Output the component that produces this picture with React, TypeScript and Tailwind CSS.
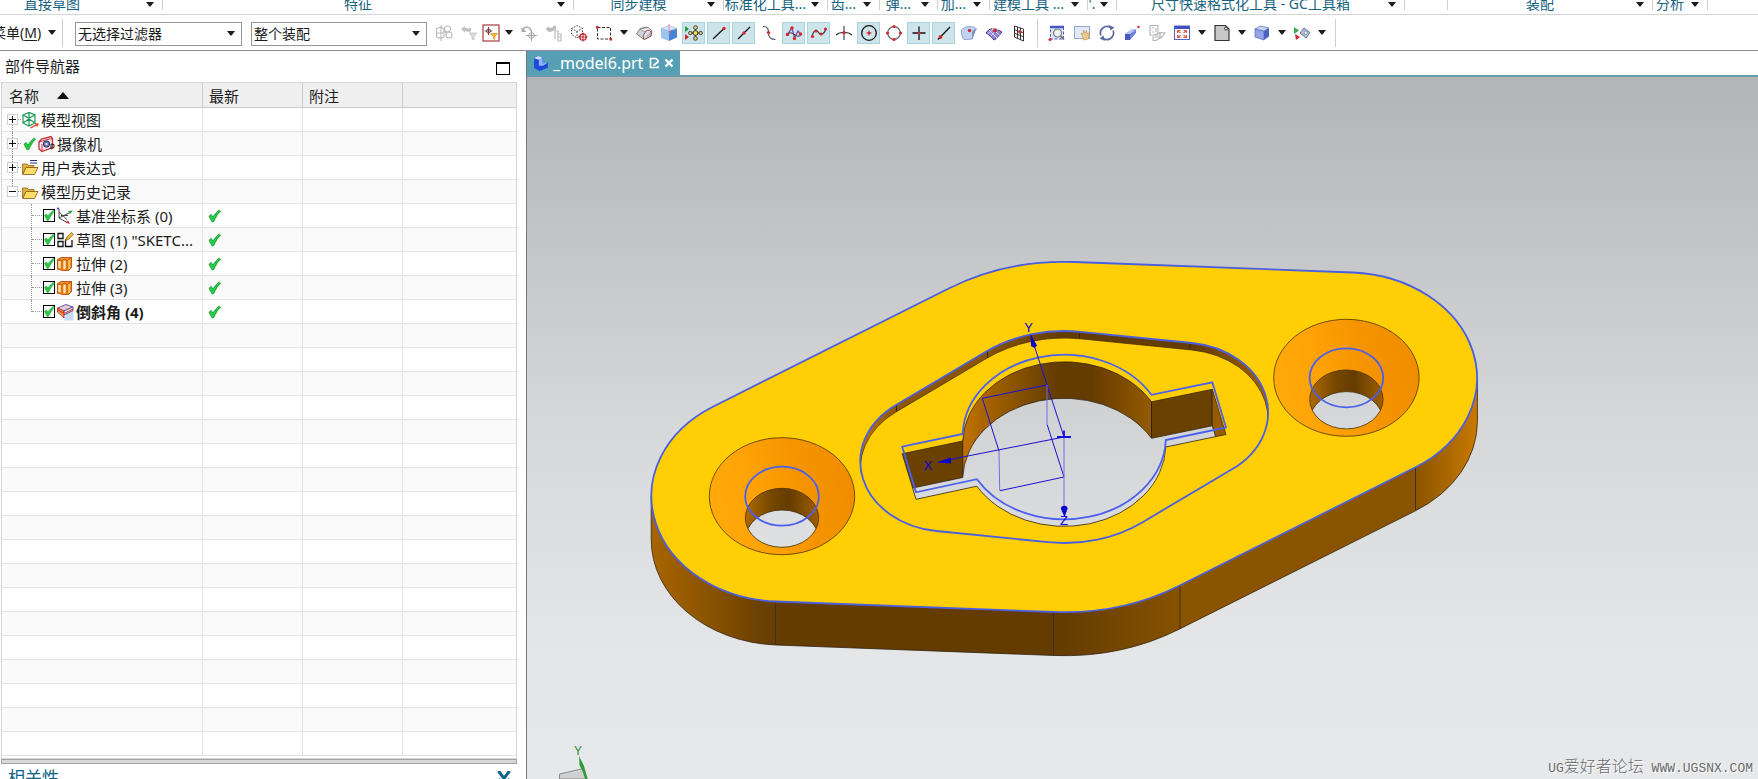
import React, { useState } from "react";

type Kids = { children?: React.ReactNode };

/* ---------- shared bits ---------- */

function Caret() {
  return (
    <svg width="8" height="5" viewBox="0 0 8 5" aria-hidden="true" className="block shrink-0">
      <path d="M0 0H8L4.5 4.6H3.5Z" fill="#1c1c1c" />
    </svg>
  );
}

function Svg({ children }: Kids) {
  return (
    <svg width="18" height="18" viewBox="0 0 18 18" fill="none" aria-hidden="true" className="block shrink-0">
      {children}
    </svg>
  );
}

function Tick() {
  return (
    <svg width="13" height="14" viewBox="0 0 13 14" aria-hidden="true" className="block shrink-0">
      <path d="M1 7.2L3.2 5.4L5 8.2C6.6 5.4 8.6 3 11.2 1L12.4 2.2C9.6 5 7.6 8.4 5.8 12.6L4 12.8Z" fill="#25cc3c" stroke="#109a35" strokeWidth="0.8" />
    </svg>
  );
}

/* ---------- ribbon ---------- */

const ribbon = [
  { label: "直接草图", w: "w-[201px]" },
  { label: "特征", w: "w-[411px]" },
  { label: "同步建模", w: "w-[150px]" },
  { label: "标准化工具...", w: "w-[104px]" },
  { label: "齿...", w: "w-[52px]" },
  { label: "弹...", w: "w-[58px]" },
  { label: "加...", w: "w-[52px]" },
  { label: "建模工具 ...", w: "w-[98px]" },
  { label: "'.", w: "w-[29px]" },
  { label: "尺寸快速格式化工具 - GC工具箱", w: "w-[288px]" },
  { label: "", w: "w-[43px]" },
  { label: "装配", w: "w-[205px]" },
  { label: "分析", w: "w-[55px]" },
];

function Ribbon() {
  return (
    <nav aria-label="功能区" className="h-[15px] shrink-0 overflow-hidden border-b border-[#d4d4d4] bg-white">
      <div className="-mt-[10px] -ml-[38px] flex h-7 items-center">
        {ribbon.map((g, i) => (
          <div key={i} className={`${g.w} flex h-full shrink-0 items-center`}>
            {g.label && (
              <button type="button" className="flex min-w-0 flex-1 items-center pr-2 text-sm text-[#17627f]">
                <span className="min-w-0 flex-1 pr-1 text-center whitespace-nowrap">{g.label}</span>
                <Caret />
              </button>
            )}
            {!g.label && <span className="flex-1" />}
            <span className="h-3 w-px bg-[#cfcfcf]" />
          </div>
        ))}
      </div>
    </nav>
  );
}

/* ---------- toolbar icons ---------- */

const red = "#d22630";

const ic: Record<string, React.ReactNode> = {
  assembly: (
    <Svg>
      <g stroke="#bcbcbc" strokeWidth="1.1">
        <path d="M1.5 4.5L6 3V14.5L1.5 13ZM6 3L9 5V13L6 14.5M1.5 9H9M6 1V17" />
        <circle cx="12.5" cy="5" r="3" /><circle cx="14" cy="11" r="3" /><path d="M9 7L12 10" />
      </g>
    </Svg>
  ),
  undoFilter: (
    <Svg>
      <path d="M1 5L5 2V4C8 3.5 9 6 11 3V7C9 9 7 7 5 7V9Z" fill="#c3c3c3" />
      <path d="M9 9H17L14 12.5V16L12 15V12.5Z" fill="#dcdcdc" stroke="#bbb" strokeWidth=".7" />
    </Svg>
  ),
  pointFilter: (
    <Svg>
      <rect x="1" y="1" width="16" height="16" stroke="#b04a4f" strokeWidth="1.3" fill="#fff" />
      <circle cx="6.5" cy="7" r="2" stroke="#6a3a3a" strokeWidth=".9" /><path d="M6.5 3V11M2.7 7H10.3" stroke="#6a3a3a" strokeWidth=".9" />
      <path d="M8.5 9.5H15.5L12.8 12.5V15.5L11.2 14.5V12.5Z" fill="#f2b632" stroke="#c98b12" strokeWidth=".6" />
    </Svg>
  ),
  undoPoint: (
    <Svg>
      <path d="M3 6C5 2 10 2 11 7" stroke="#aaa" strokeWidth="1.5" /><path d="M1.5 3V8H6.5Z" fill="#aaa" />
      <circle cx="11.5" cy="11.5" r="2.8" stroke="#999" strokeWidth=".9" /><path d="M11.5 6V17M6 11.5H17" stroke="#999" strokeWidth=".9" />
    </Svg>
  ),
  link: (
    <Svg>
      <path d="M1 5C3 1 6 6 8 3S12 2 11 6L8 7C6 8 3 9 1 5Z" fill="#bbb" />
      <path d="M10 7H13V10H16V13H13V17M10 7V15M13 10V17H16V13" stroke="#bdbdbd" strokeWidth="1.2" />
    </Svg>
  ),
  dottedCube: (
    <Svg>
      <path d="M1.5 4.5L7 1.5L12.5 4.5V10.5L7 14L1.5 10.5ZM1.5 4.5L7 7.5L12.5 4.5M7 7.5V14" stroke="#333" strokeDasharray="1.4 1.5" />
      <circle cx="13" cy="13" r="3.2" stroke={red} strokeWidth="1.3" /><path d="M13 8.5V17.5M8.5 13H17.5" stroke="#8c1c24" strokeWidth=".9" />
    </Svg>
  ),
  marquee: (
    <Svg>
      <rect x="2.5" y="3.5" width="13" height="11.5" stroke="#333" strokeDasharray="3 1.5" />
      <rect x="1" y="2" width="2.5" height="2.5" fill={red} /><rect x="14.5" y="14" width="2.5" height="2.5" fill={red} />
    </Svg>
  ),
  shaded: (
    <Svg>
      <path d="M1.5 10L5 4.5L12 3L17 7L16 12L9 15.5Z" fill="#cfd3dc" stroke="#777" strokeWidth=".9" />
      <path d="M5 5L13 3.5L17 7L11 8.5Z" fill="#f1f1f4" stroke="#777" strokeWidth=".7" />
      <path d="M8 12L11 7C12 5.5 15 6 16 8V12L9 15.5Z" fill="#dcdfe8" stroke="#9b4040" strokeWidth=".9" />
      <path d="M10.5 13.5L13 9.5L15 9V12Z" fill="#b9c0cf" />
    </Svg>
  ),
  blueCube: (
    <Svg>
      <path d="M1 4.5L9 6.8V17L1 14Z" fill="#9cc3f2" /><path d="M9 6.8L17 4.5V13.5L9 17Z" fill="#4a83d6" />
      <path d="M1 4.5L9 1.5L17 4.5L9 6.8Z" fill="#d4e4fa" stroke="#8aa6cf" strokeWidth=".5" />
      <path d="M9 0V11" stroke="#e88" strokeWidth=".9" />
    </Svg>
  ),
  snapAll: (
    <Svg>
      <path d="M0 2L4 5L0 8Z" fill="#1f9d3a" /><path d="M0 10L4 13L0 16Z" fill={red} />
      <path d="M10.5 9H4M10.5 9V3M10.5 9H17M10.5 9V15" stroke="#222" />
      <circle cx="10.5" cy="9" r="2.4" fill="#ffe14a" stroke="#222" strokeWidth=".9" />
      <g fill="#d9d08a" stroke="#333" strokeWidth=".9"><circle cx="10.5" cy="3.6" r="1.9" /><circle cx="10.5" cy="14.4" r="1.9" /><circle cx="5.3" cy="9" r="1.7" /><circle cx="15.7" cy="9" r="1.7" /></g>
    </Svg>
  ),
  endPoint: <Svg><path d="M3 15L14 4.5" stroke="#111" strokeWidth="1.2" /><circle cx="14" cy="4.5" r="1.7" fill={red} /></Svg>,
  midPoint: <Svg><path d="M3 15L15 3" stroke="#111" strokeWidth="1.2" /><circle cx="9" cy="9" r="1.7" fill={red} /></Svg>,
  control: <Svg><path d="M3 2.5C8 2.5 8.5 5 8.5 9S11 15.5 15.5 15.5" stroke="#555" strokeWidth="1.2" /><circle cx="8.5" cy="8.5" r="1.6" fill={red} /></Svg>,
  poles: (
    <Svg>
      <path d="M2 11L7 4L9.5 14L13 7L16 11" stroke="#7d4ab5" strokeWidth="1.3" /><path d="M2 11C7 4 11 16 16 11" stroke="#333" />
      <g fill={red}><circle cx="2.5" cy="10.5" r="1.7" /><circle cx="7" cy="4" r="1.7" /><circle cx="9.5" cy="14.5" r="1.7" /><circle cx="15.5" cy="10" r="1.7" /></g>
    </Svg>
  ),
  spline: (
    <Svg>
      <path d="M2 13C4 4 7 6 9 9S14 10 16 5" stroke="#333" strokeWidth="1.2" />
      <g fill={red}><circle cx="2.5" cy="12.5" r="1.6" /><circle cx="6" cy="7" r="1.6" /><circle cx="11" cy="10" r="1.6" /><circle cx="15.5" cy="5" r="1.6" /></g>
    </Svg>
  ),
  intersect: <Svg><path d="M1 11C5 7.5 13 7.5 17 11M9 2V16" stroke="#444" strokeWidth="1.2" /><circle cx="9" cy="8.5" r="1.6" fill={red} /></Svg>,
  center: <Svg><circle cx="9" cy="9" r="7.3" stroke="#111" strokeWidth="1.3" /><path d="M9 6.5V11.5M6.5 9H11.5" stroke={red} /><circle cx="9" cy="9" r="1.5" fill={red} /></Svg>,
  quadrant: (
    <Svg>
      <circle cx="9" cy="9" r="6.3" stroke="#666" strokeWidth="1.2" />
      <g fill={red}><circle cx="9" cy="2.5" r="1.6" /><circle cx="9" cy="15.5" r="1.6" /><circle cx="2.5" cy="9" r="1.6" /><circle cx="15.5" cy="9" r="1.6" /></g>
    </Svg>
  ),
  existing: <Svg><path d="M9 2.5V16M2.5 9H15.5" stroke="#111" strokeWidth="1.3" /><circle cx="9" cy="9" r="1.5" fill={red} /></Svg>,
  onCurve: <Svg><path d="M3 15.5L15 3" stroke="#111" strokeWidth="1.3" /><circle cx="5.5" cy="13" r="1.9" fill={red} /></Svg>,
  onFace: (
    <Svg>
      <path d="M1.5 6C5 2 10 2 15 3.5L16.5 5C14 7 13.5 10 12.5 15L4 15.5C2 14 1.5 10 1.5 6Z" fill="#c2d5ef" stroke="#7f9cc6" strokeWidth=".9" />
      <path d="M12.5 15L12 8C13 6 14.5 5 16.5 5C14.5 8 14 11 12.5 15Z" fill="#7490bb" /><circle cx="9.5" cy="6.5" r="1.7" fill={red} />
    </Svg>
  ),
  mesh: (
    <Svg>
      <path d="M1 9C4 4 9 3 17 8C14 11 12 15 9 16C6 12 4 11 1 9Z" fill="#8c83d8" stroke="#3a3580" strokeWidth=".9" />
      <path d="M4 6L12 14M7 4.5L14.5 11M6 12C8 9 10 7 13 5.5M3 10C5 7 8 5 10 4.5" stroke="#e4e0ff" /><circle cx="10" cy="6.5" r="1.9" fill={red} />
    </Svg>
  ),
  grid: (
    <Svg>
      <path d="M4.5 2L13.5 5V17L4.5 13ZM7.5 3V14.5M10.5 4V16M4.5 5.7L13.5 8.7M4.5 9.3L13.5 12.7" stroke="#333" strokeWidth="1" /><circle cx="10" cy="8" r="1.7" fill={red} />
    </Svg>
  ),
  zoomBox: (
    <Svg>
      <rect x="2.5" y="2.5" width="13" height="12.5" fill="#dfe6fa" stroke="#4a5ac9" strokeDasharray="3 1.5" /><path d="M2 3H16" stroke="#4356c4" strokeWidth="2.5" />
      <circle cx="9.5" cy="9" r="4" fill="#e9f3ee" stroke="#777" strokeWidth="1.2" /><path d="M12.5 12L16 15.5" stroke="#777" strokeWidth="1.8" />
      <circle cx="2" cy="15.5" r="1.5" fill={red} />
    </Svg>
  ),
  pan: (
    <Svg>
      <rect x="1.5" y="2.5" width="15" height="12" fill="#e2e9fb" stroke="#9aa5cf" />
      <path d="M8 9L10 10L10.5 6L12 9L13.5 6.5L14 10L16.5 8.5L15.5 15L11 16Z" fill="#eccb8a" stroke="#b99147" strokeWidth=".6" />
    </Svg>
  ),
  rotate: (
    <Svg>
      <path d="M3 11.5A6.5 6.5 0 0 1 12.5 3.5M15 6.5A6.5 6.5 0 0 1 5.5 14.5" stroke="#5c6d9f" strokeWidth="1.7" />
      <path d="M11 1L16.5 3.5L12.5 6.5ZM7 17L1.5 14.5L5.5 11.5Z" fill="#5c6d9f" />
    </Svg>
  ),
  extrude: (
    <Svg>
      <path d="M2 10L9 5.5L13 5.5V9L7 16H2Z" fill="#6f7fdd" /><path d="M2 10H7L13 5.5H8.5Z" fill="#b6c0f5" /><path d="M2 10H7V16H2Z" fill="#4a58c0" /><circle cx="15.5" cy="3" r="1.2" fill={red} />
    </Svg>
  ),
  copyFace: (
    <Svg>
      <path d="M2 1.5H10V11H2ZM4 4H6M4 8H6M8 4V8" stroke="#b4b4b4" strokeWidth="1.1" /><path d="M6 11L12 8.5L17 9L14 13L8 16.5H5V13H14M12 8.5V15" stroke="#b4b4b4" strokeWidth="1.1" />
    </Svg>
  ),
  window: (
    <Svg>
      <rect x="1.5" y="2" width="15" height="13.5" fill="#fff" stroke="#5566c4" /><path d="M1.5 3.5H16.5" stroke="#3f52c0" strokeWidth="3" />
      <path d="M5 7L7.5 9M5 13L7.5 11M13 7L10.5 9M13 13L10.5 11M4.5 9V6.5H7.5M13.5 9V6.5H10.5M4.5 11V13.5H7.5M13.5 11V13.5H10.5" stroke="#dd5c45" strokeWidth="1.2" />
    </Svg>
  ),
  note: <Svg><path d="M2 1.5H12.5L16 5V16.5H2Z" fill="#c8c8c8" stroke="#333" strokeWidth="1.2" /><circle cx="13" cy="4.5" r="1.5" stroke="#333" fill="#eee" /></Svg>,
  solid: (
    <Svg>
      <path d="M2 5L11 7V16L2 13Z" fill="#93a4e8" stroke="#5567b4" strokeWidth=".7" /><path d="M11 7L16 4V12.5L11 16Z" fill="#4c62c0" /><path d="M2 5L7.5 2L16 4L11 7Z" fill="#c9d3f8" stroke="#5567b4" strokeWidth=".7" />
    </Svg>
  ),
  orient: (
    <Svg>
      <path d="M1 3L6 6.5L1 10Z" fill="#3bab4f" /><path d="M2 10L7 13L3 16Z" fill={red} /><path d="M7 9L11 4L17 8.5L13 14Z" fill="#b3bfd4" stroke="#64779c" /><path d="M11 9L12.5 6.5L14.5 9L12.5 11Z" fill="#fff" stroke="#64779c" strokeWidth=".7" />
    </Svg>
  ),
};

type ToolProps = { icon: string; on?: boolean; w?: string };

function Tool({ icon, on = false, w = "w-[25px]" }: ToolProps) {
  const [active, setActive] = useState(on);
  return (
    <span className={`${w} flex shrink-0 justify-center`}>
      <button
        type="button"
        aria-label={icon}
        aria-pressed={active}
        onClick={() => setActive(!active)}
        className={`flex h-[22px] w-[23px] shrink-0 items-center justify-center border ${active ? "border-[#a9d3dd] bg-[#cde5ea]" : "border-transparent"}`}
      >
        {ic[icon]}
      </button>
    </span>
  );
}

function Drop() {
  return (
    <button type="button" aria-label="更多" className="flex h-6 w-[15px] shrink-0 items-center justify-center">
      <Caret />
    </button>
  );
}

function Bar() {
  return <span className="mx-[6px] h-7 w-px shrink-0 bg-[#cfcfcf]" />;
}

function Combo({ label, value, w }: { label: string; value: string; w: string }) {
  return (
    <label className={`${w} relative block h-6 shrink-0`}>
      <select aria-label={label} className="h-6 w-full appearance-none border border-[#979797] bg-white pl-[2px] text-sm leading-5 text-[#1c1c1c]">
        <option>{value}</option>
      </select>
      <span className="pointer-events-none absolute top-[10px] right-[7px]">
        <Caret />
      </span>
    </label>
  );
}

function Toolbar() {
  return (
    <div role="toolbar" className="flex h-9 shrink-0 items-center overflow-hidden border-b border-[#8b8f91] bg-white">
      <button type="button" className="-ml-[8px] flex w-[70px] shrink-0 items-center justify-between pr-[6px] text-sm whitespace-nowrap">
        <span>菜单(<u className="underline-offset-2">M</u>)</span>
        <Caret />
      </button>
      <span className="mr-3 h-7 w-px shrink-0 bg-[#cfcfcf]" />
      <Combo label="选择过滤器" value="无选择过滤器" w="w-[167px]" />
      <span className="w-[9px] shrink-0" />
      <Combo label="选择范围" value="整个装配" w="w-[176px]" />
      <span className="w-1 shrink-0" />
      <Tool icon="assembly" />
      <Tool icon="undoFilter" />
      <Tool icon="pointFilter" w="w-[20px]" />
      <Drop />
      <Tool icon="undoPoint" />
      <Tool icon="link" />
      <Tool icon="dottedCube" />
      <Tool icon="marquee" />
      <Drop />
      <Tool icon="shaded" />
      <Tool icon="blueCube" />
      <Tool icon="snapAll" on />
      <Tool icon="endPoint" on />
      <Tool icon="midPoint" on />
      <Tool icon="control" />
      <Tool icon="poles" on />
      <Tool icon="spline" on />
      <Tool icon="intersect" />
      <Tool icon="center" on />
      <Tool icon="quadrant" />
      <Tool icon="existing" on />
      <Tool icon="onCurve" on />
      <Tool icon="onFace" />
      <Tool icon="mesh" />
      <Tool icon="grid" />
      <Bar />
      <Tool icon="zoomBox" />
      <Tool icon="pan" />
      <Tool icon="rotate" />
      <Tool icon="extrude" />
      <Tool icon="copyFace" />
      <Tool icon="window" />
      <Drop />
      <Tool icon="note" />
      <Drop />
      <Tool icon="solid" />
      <Drop />
      <Tool icon="orient" />
      <Drop />
      <Bar />
    </div>
  );
}

/* ---------- part navigator ---------- */

function Folder({ lines = false }: { lines?: boolean }) {
  return (
    <Svg>
      <path d="M1.5 5H6L7.5 6.5H13V9H5L2 15H1.5Z" fill="#e3b23a" stroke="#8a6414" strokeWidth=".8" />
      <path d="M5 8.5H17L13.5 15.5H1.8Z" fill="#ffdc6a" stroke="#7d590c" strokeWidth=".8" />
      {lines && <path d="M9 1.5H16M9 4H16" stroke="#2a2f7a" strokeWidth="1.2" />}
    </Svg>
  );
}

const treeIcons: Record<string, React.ReactNode> = {
  views: (
    <Svg>
      <path d="M2 4L8 1.5L14 4V12L8 15L2 12ZM2 4L8 7L14 4M8 1.5V15M2 12L8 8L14 12" stroke="#1c9a5c" strokeWidth="1.2" />
      <path d="M9 16.5L14.5 13.5L14 12L18 12.5L16 16L15.2 14.8L10 17.5Z" fill="#e2492f" />
    </Svg>
  ),
  camera: (
    <Svg>
      <path d="M2 7L4.5 4L14 1.5L15.5 4V12.5L5 16.5L2 14Z" stroke="#c03038" strokeWidth="1.3" fill="#fbe4e4" />
      <path d="M2 7L12 4L15.5 4M5 16V9" stroke="#c03038" strokeWidth=".9" />
      <circle cx="9.5" cy="9" r="3.2" fill="#6d72b8" stroke="#33366f" /><circle cx="9.5" cy="9" r="1.1" fill="#fff" /><path d="M14 9V14L17 12.5V9.5Z" stroke="#222" />
    </Svg>
  ),
  expr: <Folder lines />,
  folder: <Folder />,
  csys: (
    <Svg>
      <path d="M3 2V11L11 15.5M3 11L14 5.5M3 5L11 12.5M5 8.5H12" stroke="#444" strokeWidth="1" /><path d="M0.5 2.5L2 0L3.5 2Z" fill="#2a35c8" /><path d="M12 4L17 3.5L14 7Z" fill="#21a045" /><path d="M9.5 15.5L14 17L12 13.5Z" fill={red} />
    </Svg>
  ),
  sketch: (
    <Svg>
      <path d="M2 2.5H7V7.5H2ZM2 10.5H7V15.5H2ZM12 6L9.5 9.5V15.5H16V9" stroke="#111" strokeWidth="1.3" /><path d="M9.5 9.5L11 6L15.5 1.5L17.5 3.5L13 8Z" fill="#f1b93a" stroke="#8a6412" strokeWidth=".7" />
    </Svg>
  ),
  extrude: (
    <Svg>
      <path d="M1.5 5L5 2.5H15.5V12L12.5 15.5H7L1.5 14Z" fill="#f79a2e" stroke="#c25a12" strokeWidth="1.1" />
      <path d="M3.5 6V13M8.5 6V14" stroke="#ffe9b8" strokeWidth="2" />
      <path d="M1.5 5L6 5.5V14.5M6 5.5L8.5 4L11 5.5V15.5M11 5.5L15.5 2.5" stroke="#b4500f" strokeWidth=".9" />
      <path d="M13.2 5V14" stroke="#ffc266" strokeWidth="1.5" />
    </Svg>
  ),
  chamfer: (
    <Svg>
      <path d="M11 8L17.5 6V17.5H8Z" fill="#c9dbf7" />
      <path d="M1.5 5L10 1.5L17 4L8 8Z" fill="#e9c9cf" stroke="#4a4f9c" strokeWidth=".9" />
      <path d="M1.5 5V9L8 15V8Z" fill="#f59a3c" stroke="#b03a2a" strokeWidth=".9" /><path d="M8 8L17 4V7.5L8 12Z" fill="#fff" stroke="#3d4590" strokeWidth=".9" />
      <path d="M1.5 6.5L8 10.5L17 6" stroke="#e0402f" strokeWidth="1.2" />
    </Svg>
  ),
};

type Row = { label: string; icon: string; open?: boolean; child?: boolean; tick?: boolean; bold?: boolean };

const rows: Row[] = [
  { label: "模型视图", icon: "views", open: false },
  { label: "摄像机", icon: "camera", open: false, tick: true },
  { label: "用户表达式", icon: "expr", open: false },
  { label: "模型历史记录", icon: "folder", open: true },
  { label: "基准坐标系 (0)", icon: "csys", child: true },
  { label: '草图 (1) "SKETC...', icon: "sketch", child: true },
  { label: "拉伸 (2)", icon: "extrude", child: true },
  { label: "拉伸 (3)", icon: "extrude", child: true },
  { label: "倒斜角 (4)", icon: "chamfer", child: true, bold: true },
];

function NameCell({ row, last, first }: { row: Row; last: boolean; first: boolean }) {
  if (row.child) {
    return (
      <div className="flex h-[23px] items-center pl-[29px]">
        <span className={`w-px border-l border-dotted border-[#9a9a9a] ${last ? "h-3 self-start" : "h-6"}`} />
        <span className="mr-[1px] w-[10px] border-t border-dotted border-[#9a9a9a]" />
        <label className="flex min-w-0 flex-1 items-center">
          <span className="relative mr-[1px] block h-[13px] w-3 shrink-0">
            <input type="checkbox" defaultChecked className="peer block h-[13px] w-3 appearance-none border border-black bg-white" />
            <span className="pointer-events-none absolute top-0 left-0 hidden peer-checked:block">
              <svg width="12" height="13" viewBox="0 0 12 13" aria-hidden="true" className="block">
                <path d="M1.5 6.5L3.5 5L5 7.3C6.3 5 8 3 10.5 1.5L11.3 2.5C9 4.8 7.2 7.8 5.6 11.2L4.2 11.4Z" fill="#25cc3c" stroke="#109a35" strokeWidth=".6" />
              </svg>
            </span>
          </span>
          {treeIcons[row.icon]}
          <span className={`ml-[2px] whitespace-nowrap ${row.bold ? "font-bold" : ""}`}>{row.label}</span>
        </label>
      </div>
    );
  }
  return (
    <div className="flex h-[23px] items-center pl-[5px]">
      <span className="flex h-6 w-[11px] shrink-0 flex-col items-center">
        <span className={`flex-1 border-l border-dotted ${first ? "border-transparent" : "border-[#9a9a9a]"}`} />
        <button type="button" aria-label={row.open ? "折叠" : "展开"} className="block h-[11px] w-[11px] border border-[#d0d0d0] bg-white">
          <svg width="9" height="9" viewBox="0 0 9 9" aria-hidden="true" className="block">
            <path d={row.open ? "M1 4.5H8" : "M1 4.5H8M4.5 1V8"} stroke="#111" strokeWidth="1" />
          </svg>
        </button>
        <span className={`flex-1 border-l border-dotted ${row.open ? "border-transparent" : "border-[#9a9a9a]"}`} />
      </span>
      <span className="w-[3px] border-t border-dotted border-[#9a9a9a]" />
      {row.tick && <span className="mr-[1px] ml-[2px]"><Tick /></span>}
      {treeIcons[row.icon]}
      <span className="ml-[2px] truncate">{row.label}</span>
    </div>
  );
}

function Navigator() {
  const filler = 27 - rows.length;
  const cell = "h-6 border-r border-b border-[#e3e3e3] p-0";
  const head = "h-[25px] border-r border-b border-[#cccccc] p-0 pt-px text-left font-normal";
  return (
    <aside className="flex w-[527px] shrink-0 flex-col overflow-hidden border-r border-[#777777] bg-white">
      <div className="flex h-[31px] shrink-0 items-center justify-between pr-4 pl-[5px]">
        <h2 className="text-[15px]">部件导航器</h2>
        <button type="button" aria-label="最大化" className="mt-[3px] h-[13px] w-[14px] border border-t-2 border-black" />
      </div>
      <div className="mr-[9px] ml-[1px] shrink-0 border border-[#d5d5d5] pb-[2px]">
        <table className="w-full table-fixed border-separate border-spacing-0 text-[15px] leading-[22px]">
          <colgroup>
            <col className="w-[201px]" />
            <col className="w-[100px]" />
            <col className="w-[100px]" />
            <col />
          </colgroup>
          <thead className="bg-[#efefef]">
            <tr>
              <th className={head}>
                <span className="flex items-center pl-[7px]">
                  名称
                  <svg width="12" height="7" viewBox="0 0 12 7" aria-hidden="true" className="ml-[18px]"><path d="M0 7L6 0L12 7Z" fill="#111" /></svg>
                </span>
              </th>
              <th className={head}><span className="block pl-[6px]">最新</span></th>
              <th className={head}><span className="block pl-[6px]">附注</span></th>
              <th className={`${head} border-r-0`} />
            </tr>
          </thead>
          <tbody>
            {rows.map((r, i) => (
              <tr key={r.label} className="even:bg-[#fafafa]">
                <td className={cell}><NameCell row={r} first={i === 0} last={i === rows.length - 1} /></td>
                <td className={cell}>{r.child && <span className="block pl-[5px]"><Tick /></span>}</td>
                <td className={cell} />
                <td className={`${cell} border-r-0`} />
              </tr>
            ))}
            {Array.from({ length: filler }, (_, i) => (
              <tr key={i} className="even:bg-[#fafafa]">
                <td className={cell} /><td className={cell} /><td className={cell} /><td className={`${cell} border-r-0`} />
              </tr>
            ))}
          </tbody>
        </table>
      </div>
      <div className="mr-[9px] ml-[1px] h-[5px] shrink-0 border border-[#a3a3a3] bg-[#d9d9d9]" />
      <button type="button" className="flex h-7 shrink-0 items-center justify-between pr-[15px] pl-2 text-[17px] text-[#0d6485]">
        <span>相关性</span>
        <svg width="14" height="14" viewBox="0 0 14 14" fill="none" aria-hidden="true"><path d="M1.5 0L7 7.5L12.5 0M1.5 8L7 14L12.5 8" stroke="#0d6485" strokeWidth="3" /></svg>
      </button>
    </aside>
  );
}

/* ---------- model view ---------- */

const PLATE =
  "M775.9 601.5A131 105.5 0 0 1 712.9 406.7L949.2 288.3A217.6 175.2 0 0 1 1074.4 262L1352.5 272.5A131 105.5 0 0 1 1415.5 467.3L1179.2 585.7A217.6 175.2 0 0 1 1054 612Z";
const SIDE =
  "M651.2 496V539.5A131 105.5 0 0 0 775.9 645L1054 655.5A217.6 175.2 0 0 0 1179.2 629.2L1415.5 510.8A131 105.5 0 0 0 1477.4 421.5V378Z";
const POCKET =
  "M936.4 531A86.9 70 0 0 1 895.6 405.2L986.2 351.6A131.7 106 0 0 1 1080.5 331.8L1192 343A86.9 70 0 0 1 1232.8 468.8L1142.2 522.4A131.7 106 0 0 1 1047.9 542.2Z";
const KEYHOLE =
  "M962.7 434A101.6 82 0 0 1 1151.5 394.8L1212.3 382.3L1226 427.5L1165.8 440A101.6 82 0 0 1 976.9 479.2L916 492.3L902.2 446.7Z";

function Countersink({ cx, cy, id }: { cx: number; cy: number; id: string }) {
  return (
    <g>
      <clipPath id={id}><ellipse cx={cx} cy={cy + 21.6} rx="36.7" ry="29.5" /></clipPath>
      <ellipse cx={cx} cy={cy} rx="72.7" ry="58.5" fill="url(#cone)" stroke="#4a3200" strokeWidth=".8" />
      <g clipPath={`url(#${id})`}>
        <rect x={cx - 37} y={cy - 10} width="74" height="64" fill="url(#bore)" />
        <ellipse cx={cx} cy={cy + 43.3} rx="36.7" ry="29.5" fill="url(#sky)" stroke="#3a2800" strokeWidth=".8" />
      </g>
      <ellipse cx={cx} cy={cy + 21.6} rx="36.7" ry="29.5" stroke="#4a3200" strokeWidth=".8" />
      <ellipse cx={cx} cy={cy} rx="36.8" ry="29.5" stroke="#4a60ee" strokeWidth="1.8" />
    </g>
  );
}

function Model() {
  return (
    <svg viewBox="527 77 1231 702" fill="none" preserveAspectRatio="xMidYMid meet" className="block h-full w-full" role="img" aria-label="零件模型">
      <defs>
        <linearGradient id="sky" gradientUnits="userSpaceOnUse" x1="0" y1="77" x2="0" y2="779">
          <stop offset="0" stopColor="#b3b4b6" /><stop offset=".5" stopColor="#d7d8da" /><stop offset=".85" stopColor="#e6e7e9" /><stop offset="1" stopColor="#e7e8ea" />
        </linearGradient>
        <linearGradient id="side" gradientUnits="userSpaceOnUse" x1="651" y1="0" x2="1478" y2="0">
          <stop offset="0" stopColor="#a86500" /><stop offset=".06" stopColor="#8f5600" /><stop offset=".13" stopColor="#6c4100" /><stop offset=".16" stopColor="#653c00" />
          <stop offset=".5" stopColor="#653c00" /><stop offset=".638" stopColor="#865200" /><stop offset=".64" stopColor="#8a5400" />
          <stop offset=".925" stopColor="#8a5400" /><stop offset="1" stopColor="#ca7a00" />
        </linearGradient>
        <linearGradient id="cone" x1="0" y1=".6" x2="1" y2=".4">
          <stop offset="0" stopColor="#ffaa0a" /><stop offset=".3" stopColor="#ffa306" /><stop offset=".65" stopColor="#f59400" /><stop offset="1" stopColor="#f08d00" />
        </linearGradient>
        <linearGradient id="bore">
          <stop offset="0" stopColor="#b06a00" /><stop offset=".35" stopColor="#754700" /><stop offset=".6" stopColor="#653c00" /><stop offset="1" stopColor="#a06000" />
        </linearGradient>
        <linearGradient id="wall" gradientUnits="userSpaceOnUse" x1="963" y1="0" x2="1153" y2="0">
          <stop offset="0" stopColor="#c07200" /><stop offset=".15" stopColor="#a16000" /><stop offset=".42" stopColor="#6f4300" /><stop offset=".5" stopColor="#653c00" /><stop offset=".68" stopColor="#653c00" /><stop offset="1" stopColor="#965b00" />
        </linearGradient>
        <linearGradient id="rim" gradientUnits="userSpaceOnUse" x1="860" y1="0" x2="1268" y2="0">
          <stop offset="0" stopColor="#c07200" /><stop offset=".09" stopColor="#8f5600" /><stop offset=".3" stopColor="#8a5400" /><stop offset=".5" stopColor="#653c00" /><stop offset=".82" stopColor="#653c00" /><stop offset="1" stopColor="#a06000" />
        </linearGradient>
        <clipPath id="pocket"><path d={POCKET} /></clipPath>
        <clipPath id="key"><path d={KEYHOLE} transform="translate(0 7)" /></clipPath>
      </defs>

      <path d={SIDE} fill="url(#side)" stroke="#2e2416" strokeWidth=".8" />
      <path d="M775.5 602V645M1053.5 612V655M1180 586V629M1415.5 467V510" stroke="#3e2d2a" strokeWidth="1" />
      <path d={PLATE} fill="#ffce05" stroke="#4a5fe0" strokeWidth="1.8" />

      <g clipPath="url(#pocket)">
        <path d={POCKET} fill="url(#rim)" />
        <path d="M896.5 400V415M987.5 348V362M1079.5 330V345M1190 340V352" stroke="#2e2416" strokeWidth="1" />
        <path d={POCKET} transform="translate(0 7)" fill="#ffce05" stroke="#4a3200" strokeWidth=".8" />
      </g>
      <path d={POCKET} stroke="#4a5fe0" strokeWidth="1.8" />

      <g clipPath="url(#key)">
        <path d="M962.7 350H1151.5V540H962.7Z" fill="url(#wall)" />
        <path d="M900 440H962.7V540H900ZM1151.5 380H1212V450H1151.5Z" fill="#6b4100" />
        <path d="M1212 380H1230V480H1212Z" fill="#975b00" />
        <path d="M962.7 434V482M1151.5 394V440M1212 380V434" stroke="#2e2416" strokeWidth="1" />
        <path d={KEYHOLE} transform="translate(0 43.5)" fill="url(#sky)" stroke="#2e2416" strokeWidth=".8" />
      </g>
      <path d={KEYHOLE} transform="translate(0 7)" stroke="#3a2a10" strokeWidth=".8" />
      <path d={KEYHOLE} stroke="#4a60ee" strokeWidth="1.8" />

      <Countersink cx={782} cy={496.2} id="boreLeft" />
      <Countersink cx={1346.4} cy={377.8} id="boreRight" />

      <g stroke="#1a10d8" strokeWidth="1">
        <path d="M1064 437L945 460.5M1064 437L1034 345M982.3 398.3L1046.7 385M982.3 398.3L999 451M1047.3 425L1064 477L1000 490.7" />
        <path d="M1064 437V507M1047 385V425M999 451L999.7 490.7" stroke="#6f6cea" />
        <path d="M1057 437H1071M1064 430.5V438" strokeWidth="1.8" />
      </g>
      <g fill="#0c00cc">
        <path d="M936.5 462.5L951 457.5V463.5Z" />
        <path d="M1030.5 334L1037 345.5L1034.5 348L1031 346Z" />
        <path d="M1061 509A3 3 0 0 1 1067.5 509L1064.5 517Z" />
      </g>
      <g fill="#0c00cc" className="font-[Liberation_Sans] text-[13px]" textAnchor="middle">
        <text x="928" y="470">X</text>
        <text x="1028.5" y="332">Y</text>
        <text x="1064" y="525">Z</text>
      </g>

      <path d="M559.5 774L583.5 768.5L586.5 779H559.5Z" fill="#cfd0d1" stroke="#8b8b8b" strokeWidth="1" />
      <path d="M579 756L584 766L588 780H585.5L582 770L579.5 765Z" fill="#2f9a38" />
      <text x="578" y="755" textAnchor="middle" fill="#2f8a38" className="font-[Liberation_Sans] text-[12px]">Y</text>
    </svg>
  );
}

function Viewer() {
  return (
    <section className="flex min-w-0 flex-1 flex-col">
      <div className="flex h-[26px] shrink-0 items-start border-b-2 border-[#6a9bab] bg-white">
        <div className="flex h-6 w-[153px] shrink-0 items-center bg-[#569fb5] pl-[6px] text-white">
          <svg width="17" height="17" viewBox="0 0 16 16" aria-hidden="true" className="block">
            <path d="M1 3L5 1L9 2.5V8L14 7V12L6 15L1 12Z" fill="#1c49d8" /><path d="M1 3L5 1L9 2.5L5.5 4.5Z" fill="#cfe0ff" /><path d="M5.5 4.5L9 2.5V8L14 7L9.5 10L5.5 10Z" fill="#8fb3ff" />
          </svg>
          <a href="#model" className="ml-[3px] font-['Noto_Sans'] text-[16px] leading-6">_model6.prt</a>
          <svg width="11" height="12" viewBox="0 0 11 12" fill="none" aria-hidden="true" className="ml-[6px] block">
            <path d="M9 5V3.5L7 1.5H1.5V10.5H9V9" stroke="#fff" strokeWidth="1.6" /><path d="M4.5 8.5L9.5 4.5" stroke="#fff" strokeWidth="1.8" />
          </svg>
          <button type="button" aria-label="关闭" className="ml-1">
            <svg width="10" height="10" viewBox="0 0 10 10" aria-hidden="true" className="block"><path d="M1.5 1.5L8.5 8.5M8.5 1.5L1.5 8.5" stroke="#fff" strokeWidth="2.3" /></svg>
          </button>
        </div>
      </div>
      <div className="relative min-h-0 flex-1 bg-[linear-gradient(to_bottom,#b3b4b6_0%,#d7d8da_50%,#e6e7e9_85%,#e7e8ea_100%)]">
        <Model />
        <p className="absolute right-[5px] bottom-0 font-['Liberation_Mono','Noto_Sans_CJK_SC',monospace] text-[13px] leading-5 whitespace-nowrap text-[#6a6b6d] [text-shadow:1px_1px_0_#ffffff]">
          UG<span className="text-[16px] font-light">爱好者论坛</span> WWW.UGSNX.COM
        </p>
      </div>
    </section>
  );
}

export default function App() {
  return (
    <div className="flex h-screen flex-col overflow-hidden bg-white font-['Noto_Sans','Noto_Sans_CJK_SC',sans-serif] text-[#1c1c1c]">
      <Ribbon />
      <Toolbar />
      <main className="flex min-h-0 flex-1">
        <Navigator />
        <Viewer />
      </main>
    </div>
  );
}
